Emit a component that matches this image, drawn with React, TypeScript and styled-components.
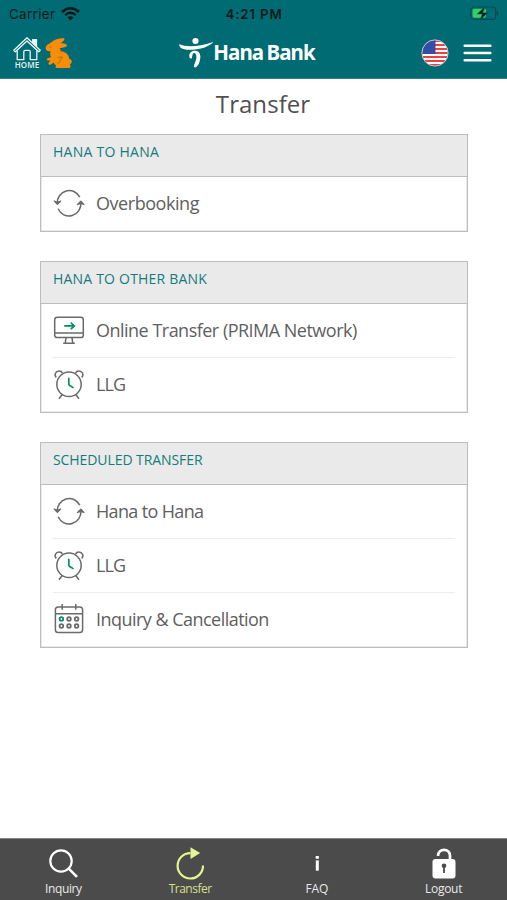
import React from "react";
import styled, { createGlobalStyle } from "styled-components";

const GlobalStyle = createGlobalStyle`
  * { box-sizing: border-box; }
  body { margin: 0; background: #fff; font-family: "Open Sans", "Noto Sans", sans-serif; }
`;

const Screen = styled.div`
  width: 507px;
  height: 900px;
  display: flex;
  flex-direction: column;
  background: #fff;
  overflow: hidden;
`;

const Header = styled.header`
  height: 79px;
  flex: none;
  background: #006b73;
  border-bottom: 1px solid #2d858b;
`;

const StatusBar = styled.div`
  height: 27px;
  display: grid;
  grid-template-columns: 1fr auto 1fr;
  align-items: center;
  padding: 0 8px 0 9px;
  font-family: Inter, "Liberation Sans", sans-serif;
  font-size: 13.3px;
  color: #061a1c;
`;

const Carrier = styled.div`
  display: flex;
  align-items: center;
  gap: 6px;
  letter-spacing: 0.4px;
`;

const Time = styled.div`
  font-weight: 600;
  letter-spacing: 0.85px;
`;

const BatterySlot = styled.div`
  display: flex;
  justify-content: flex-end;
`;

const NavBar = styled.div`
  height: 51px;
  display: grid;
  grid-template-columns: 1fr auto 1fr;
  align-items: center;
  padding: 0 15px 0 12px;
`;

const NavGroup = styled.div<{ $end?: boolean }>`
  display: flex;
  align-items: center;
  justify-content: ${(p) => (p.$end ? "flex-end" : "flex-start")};
  gap: ${(p) => (p.$end ? "14px" : "3px")};
`;

const HomeLink = styled.div`
  display: flex;
  flex-direction: column;
  align-items: center;
  width: 30px;
`;

const HomeText = styled.span`
  font-size: 8px;
  line-height: 8px;
  font-weight: 600;
  color: #e9f6f6;
  letter-spacing: 0.1px;
`;

const Brand = styled.div`
  display: flex;
  align-items: center;
  color: #fff;
  padding: 0 10px 1px 0;
`;

const BrandName = styled.span`
  font-family: "Noto Sans", "Open Sans", sans-serif;
  font-size: 20.5px;
  line-height: 26px;
  font-weight: 700;
  letter-spacing: -0.95px;
  word-spacing: -1px;
  white-space: nowrap;
`;

const Main = styled.main`
  flex: 1;
  padding: 0 39px 0 40px;
`;

const Title = styled.h1`
  margin: 0;
  height: 55px;
  padding: 9px 0 0 18px;
  font-size: 24px;
  line-height: 32px;
  font-weight: 400;
  letter-spacing: 0.05px;
  text-align: center;
  color: #505050;
`;

const Card = styled.section`
  border: 1px solid #bdbdbd;
  box-shadow: inset 0 0 0 0.5px #d5d5d5;
  margin-bottom: 29px;
`;

const CardTitle = styled.h2<{ $spacing: number }>`
  margin: 0;
  height: 42px;
  padding: 7px 12px 0;
  background: #eaeaea;
  border-bottom: 1px solid #bdbdbd;
  font-size: 14px;
  line-height: 20px;
  font-weight: 400;
  color: #157b7b;
  letter-spacing: ${(p) => p.$spacing}px;
`;

const Rows = styled.div`
  padding: 0 12px 1px;
`;

const Row = styled.div`
  height: 54px;
  display: flex;
  align-items: center;
  gap: 11px;
  padding-bottom: 1px;
  &:first-child { height: 53px; }
  & + & { border-top: 1px solid #ececec; }
`;

const RowLabel = styled.span<{ $spacing: number }>`
  font-size: 18px;
  line-height: 26px;
  color: #606060;
  letter-spacing: ${(p) => p.$spacing}px;
  white-space: nowrap;
`;

const TabBar = styled.nav`
  height: 62px;
  flex: none;
  display: grid;
  grid-template-columns: repeat(4, 1fr);
  background: #4b4b4b;
  border-top: 1px solid #858585;
`;

const Tab = styled.div<{ $active?: boolean }>`
  display: flex;
  flex-direction: column;
  align-items: center;
  padding-top: 8px;
  color: ${(p) => (p.$active ? "#e6f58f" : "#fff")};
`;

const TabLabel = styled.span<{ $spacing: number }>`
  font-size: 12px;
  line-height: 16px;
  opacity: 0.88;
  letter-spacing: ${(p) => p.$spacing}px;
`;

const WifiIcon = () => (
  <svg width="19" height="14" viewBox="0 0 19 14" fill="none" stroke="#061a1c" strokeWidth="2.4">
    <path d="M1 5 Q9.5 -2.5 18 5" />
    <path d="M4.2 8.1 Q9.5 3.5 14.8 8.1" />
    <path d="M6.7 10.4 Q9.5 8 12.3 10.4 L9.5 13.4 Z" fill="#061a1c" stroke="none" />
  </svg>
);

const BatteryIcon = () => (
  <svg width="29" height="15" viewBox="0 0 29 15">
    <rect x="0.8" y="1" width="25" height="12.4" rx="3.5" fill="none" stroke="#08474d" strokeWidth="1.1" />
    <rect x="2.5" y="2.7" width="13.5" height="9" rx="1.8" fill="#37cf62" />
    <path d="M27 5v4.6c1.7-.6 1.7-4 0-4.6z" fill="#08474d" />
    <path d="M14.8 .8 7.2 8h5l-2 6L17.8 6.7h-5z" fill="#061a1c" stroke="#006b73" strokeWidth=".5" />
  </svg>
);

const HouseIcon = () => (
  <svg width="30" height="25" viewBox="0 0 30 25" fill="none" stroke="#e9f6f6" strokeWidth="1.3" strokeLinejoin="round">
    <path d="M1.8 14.2 15 1.8 28.2 14.2 26.7 15.7 15 4.9 3.3 15.7z" />
    <path d="M20.7 6.2V3.6h3.8v6.6z" fill="#e9f6f6" />
    <path d="M5.2 14.5v9.2h6.6v-8q0-1.3 1.3-1.3h3.8q1.3 0 1.3 1.3v8h6.6v-9.2" />
  </svg>
);

const RabbitIcon = () => (
  <svg width="28" height="32" viewBox="0 0 28 32">
    <path
      d="M1.2 9C2.4 7.2 4.6 6.8 6.3 5.2 9.6 2.2 14.5 1 18.7 1.3 20.4 1.5 19.4 3.6 15.6 6.4 18.4 5.8 22 6.9 22 8.5 21.6 10.2 18 10.8 14.4 11.2 15.6 12 16 13 15.4 14.2 19.6 13.8 24.2 17.6 24.4 22.2 26 22 27 23.2 26.7 25 26.5 26.2 25.6 26.8 25 27.2L25.6 29.8 24.3 31H12.4C10.4 31 10 29.4 11.2 28.4 9.8 27.6 9 26.6 8.6 25.6L6 27.4C4 28.4 2.6 26.8 4 25.2L5.6 23.4 3.4 23.6C1.2 23.6 1 21.6 2.8 21.2L6 20.2C5 17.8 5 15.8 5.6 14 3.4 14.6 1 13.8.8 11.8.6 10.6.8 9.6 1.2 9z"
      fill="#fa8d08"
    />
    <circle cx="5.6" cy="10" r=".9" fill="#b67a1b" />
    <path d="M12.6 21q3-2.2 4.9-.6-2.2 1-2.4 3.3-.2 2.2-2.7 2.8" fill="none" stroke="#9a711b" strokeWidth=".9" />
  </svg>
);

const BrandIcon = () => (
  <svg width="34" height="31" viewBox="0 0 34 31" fill="#fff">
    <ellipse cx="16.5" cy="4" rx="3.1" ry="2.9" />
    <path d="M.5 7.3C7 10.3 20 9.7 33.4 5.2c.6-.2.7.4.2.7-3.2 2.2-7.4 4.7-11.8 5.7C14.7 13.2 5 13.5 2 11.1.6 10-.3 8 .5 7.3z" />
    <path d="M10.3 19.5c-.3-3.8 2.5-5.8 5.8-5.8 3.6 0 5.7 2.9 5.2 7-.4 4-1.9 7.9-4 9.4-1.3.8-2.6.1-2.3-1.4.7-3.1 2.6-6 2.4-8.9-.1-2-.9-3.7-2.2-3.7-1.9 0-1.8 2.8-2.3 4.9-.4 1.2-2.5.5-2.6-1.5z" />
  </svg>
);

const FlagIcon = () => (
  <svg width="28" height="28" viewBox="0 0 28 28">
    <defs><clipPath id="flagRound"><circle cx="14" cy="14" r="13" /></clipPath></defs>
    <g clipPath="url(#flagRound)">
      <rect width="28" height="28" fill="#fff" />
      {[1, 5, 9, 13, 17, 21, 25].map((y) => <rect key={y} y={y} width="28" height="2" fill="#ee3f43" />)}
      <rect width="14.5" height="15" fill="#314da3" />
      {[4, 7, 10, 13].map((y) => [3, 6, 9, 12].map((x) => <circle key={`${x}-${y}`} cx={x} cy={y} r=".4" fill="#5870b6" />))}
    </g>
    <circle cx="14" cy="14" r="13.1" fill="none" stroke="#b9c6d0" />
  </svg>
);

const MenuIcon = () => (
  <svg width="29" height="20" viewBox="0 0 29 20" stroke="#fff" strokeWidth="2.5" strokeLinecap="round">
    <path d="M1.7 2.8h25.6M1.7 10h25.6M1.7 17.2h25.6" />
  </svg>
);

const line = { fill: "none", stroke: "#6a6a6a", strokeWidth: 1.5 } as const;

const CycleIcon = () => (
  <svg width="32" height="32" viewBox="0 0 32 32" {...line}>
    <path d="M4.2 16.8A12 12.6 0 0 1 26.8 10.2M27.9 15.2A12 12.6 0 0 1 5.1 21.8" />
    <path d="M1.3 14.1l3.1 3.2 3.3-3.2-3.3 1.2zM24.5 17.5l3.3-3.2 3.1 3.2-3.1-1.2z" fill="#6a6a6a" strokeWidth="1.3" strokeLinejoin="round" />
  </svg>
);

const MonitorIcon = () => (
  <svg width="32" height="32" viewBox="0 0 32 32" {...line}>
    <rect x="1.7" y="3.2" width="28.6" height="20.3" rx="2.6" />
    <path d="M2 19h28M13 23.7l-.7 5.2M19 23.7l.7 5.2M10.2 29.3h11.6" />
    <path d="M11.2 11.9h9.5M17.8 8.7l3.5 3.2-3.5 3.2" stroke="#078c68" strokeWidth="1.7" />
  </svg>
);

const AlarmIcon = () => (
  <svg width="32" height="32" viewBox="0 0 32 32" {...line}>
    <circle cx="16" cy="16.3" r="12.2" />
    <path d="M3.3 9.4C.7 6.8 2.7 3.1 6 3.1c1.7 0 2.9.7 3.4 2M28.7 9.4c2.6-2.6.6-6.3-2.7-6.3-1.7 0-2.9.7-3.4 2M9 26.7l-3 4M23 26.7l3 4" />
    <path d="M15.8 9.7v6.2q0 .8.6 1.3l4.1 2.7" stroke="#078c68" strokeWidth="1.7" />
  </svg>
);

const CalendarIcon = () => (
  <svg width="32" height="32" viewBox="0 0 32 32" {...line}>
    <rect x="2.4" y="4" width="27.2" height="25.5" rx="2.8" />
    <path d="M2.4 10.7h27.2M9.2 1v5.8M22.8 1v5.8" />
    {[8.4, 16, 23.6].map((x) => [16, 23].map((y) => (
      <circle key={`${x}-${y}`} cx={x} cy={y} r="1.8" strokeWidth="1.8" stroke={x === 8.4 && y === 16 ? "#078c68" : "#6a6a6a"} />
    )))}
  </svg>
);

const SearchIcon = () => (
  <svg width="34" height="34" viewBox="0 0 34 34" fill="none" stroke="currentColor" strokeWidth="2.2">
    <circle cx="15" cy="14" r="10.7" />
    <path d="M22.7 21.6 31 29.8" strokeWidth="2.6" />
  </svg>
);

const RefreshIcon = () => (
  <svg width="34" height="34" viewBox="0 0 34 34" fill="none" stroke="currentColor" strokeWidth="2.2">
    <path d="M17.5 6.1A12.7 12.7 0 1 0 30 18.5" />
    <path d="M17.5.2 27.2 6 17.5 12z" fill="currentColor" stroke="none" />
  </svg>
);

const InfoIcon = () => (
  <svg width="34" height="34" viewBox="0 0 34 34" fill="currentColor">
    <rect x="15.7" y="9" width="3.2" height="2.8" rx=".6" />
    <rect x="15.8" y="13.4" width="3" height="10.3" />
  </svg>
);

const LockIcon = () => (
  <svg width="34" height="34" viewBox="0 0 34 34">
    <path d="M11 8.9C11.2.8 23 .8 23 8.9v5" fill="none" stroke="currentColor" strokeWidth="2.7" />
    <rect x="5.5" y="12" width="23" height="19.5" rx="3" fill="currentColor" />
    <circle cx="17" cy="18.8" r="2.3" fill="#4b4b4b" />
    <rect x="16.1" y="19.5" width="1.8" height="6.5" fill="#4b4b4b" />
  </svg>
);

type Item = { label: string; spacing: number; Icon: React.FC };
type Group = { title: string; spacing: number; items: Item[] };

const groups: Group[] = [
  { title: "HANA TO HANA", spacing: 0.26, items: [{ label: "Overbooking", spacing: -0.45, Icon: CycleIcon }] },
  {
    title: "HANA TO OTHER BANK",
    spacing: 0.2,
    items: [
      { label: "Online Transfer (PRIMA Network)", spacing: -0.51, Icon: MonitorIcon },
      { label: "LLG", spacing: -0.9, Icon: AlarmIcon },
    ],
  },
  {
    title: "SCHEDULED TRANSFER",
    spacing: -0.08,
    items: [
      { label: "Hana to Hana", spacing: -0.65, Icon: CycleIcon },
      { label: "LLG", spacing: -0.9, Icon: AlarmIcon },
      { label: "Inquiry & Cancellation", spacing: -0.53, Icon: CalendarIcon },
    ],
  },
];

const tabs: Item[] = [
  { label: "Inquiry", spacing: -0.4, Icon: SearchIcon },
  { label: "Transfer", spacing: -0.5, Icon: RefreshIcon },
  { label: "FAQ", spacing: -0.2, Icon: InfoIcon },
  { label: "Logout", spacing: -0.3, Icon: LockIcon },
];

export default function App() {
  return (
    <Screen>
      <GlobalStyle />
      <Header>
        <StatusBar>
          <Carrier>Carrier <WifiIcon /></Carrier>
          <Time>4:21 PM</Time>
          <BatterySlot><BatteryIcon /></BatterySlot>
        </StatusBar>
        <NavBar>
          <NavGroup>
            <HomeLink><HouseIcon /><HomeText>HOME</HomeText></HomeLink>
            <RabbitIcon />
          </NavGroup>
          <Brand><BrandIcon /><BrandName>Hana Bank</BrandName></Brand>
          <NavGroup $end><FlagIcon /><MenuIcon /></NavGroup>
        </NavBar>
      </Header>
      <Main>
        <Title>Transfer</Title>
        {groups.map((g) => (
          <Card key={g.title}>
            <CardTitle $spacing={g.spacing}>{g.title}</CardTitle>
            <Rows>
              {g.items.map(({ label, spacing, Icon }) => (
                <Row key={label}><Icon /><RowLabel $spacing={spacing}>{label}</RowLabel></Row>
              ))}
            </Rows>
          </Card>
        ))}
      </Main>
      <TabBar>
        {tabs.map(({ label, spacing, Icon }) => (
          <Tab key={label} $active={label === "Transfer"}>
            <Icon /><TabLabel $spacing={spacing}>{label}</TabLabel>
          </Tab>
        ))}
      </TabBar>
    </Screen>
  );
}
